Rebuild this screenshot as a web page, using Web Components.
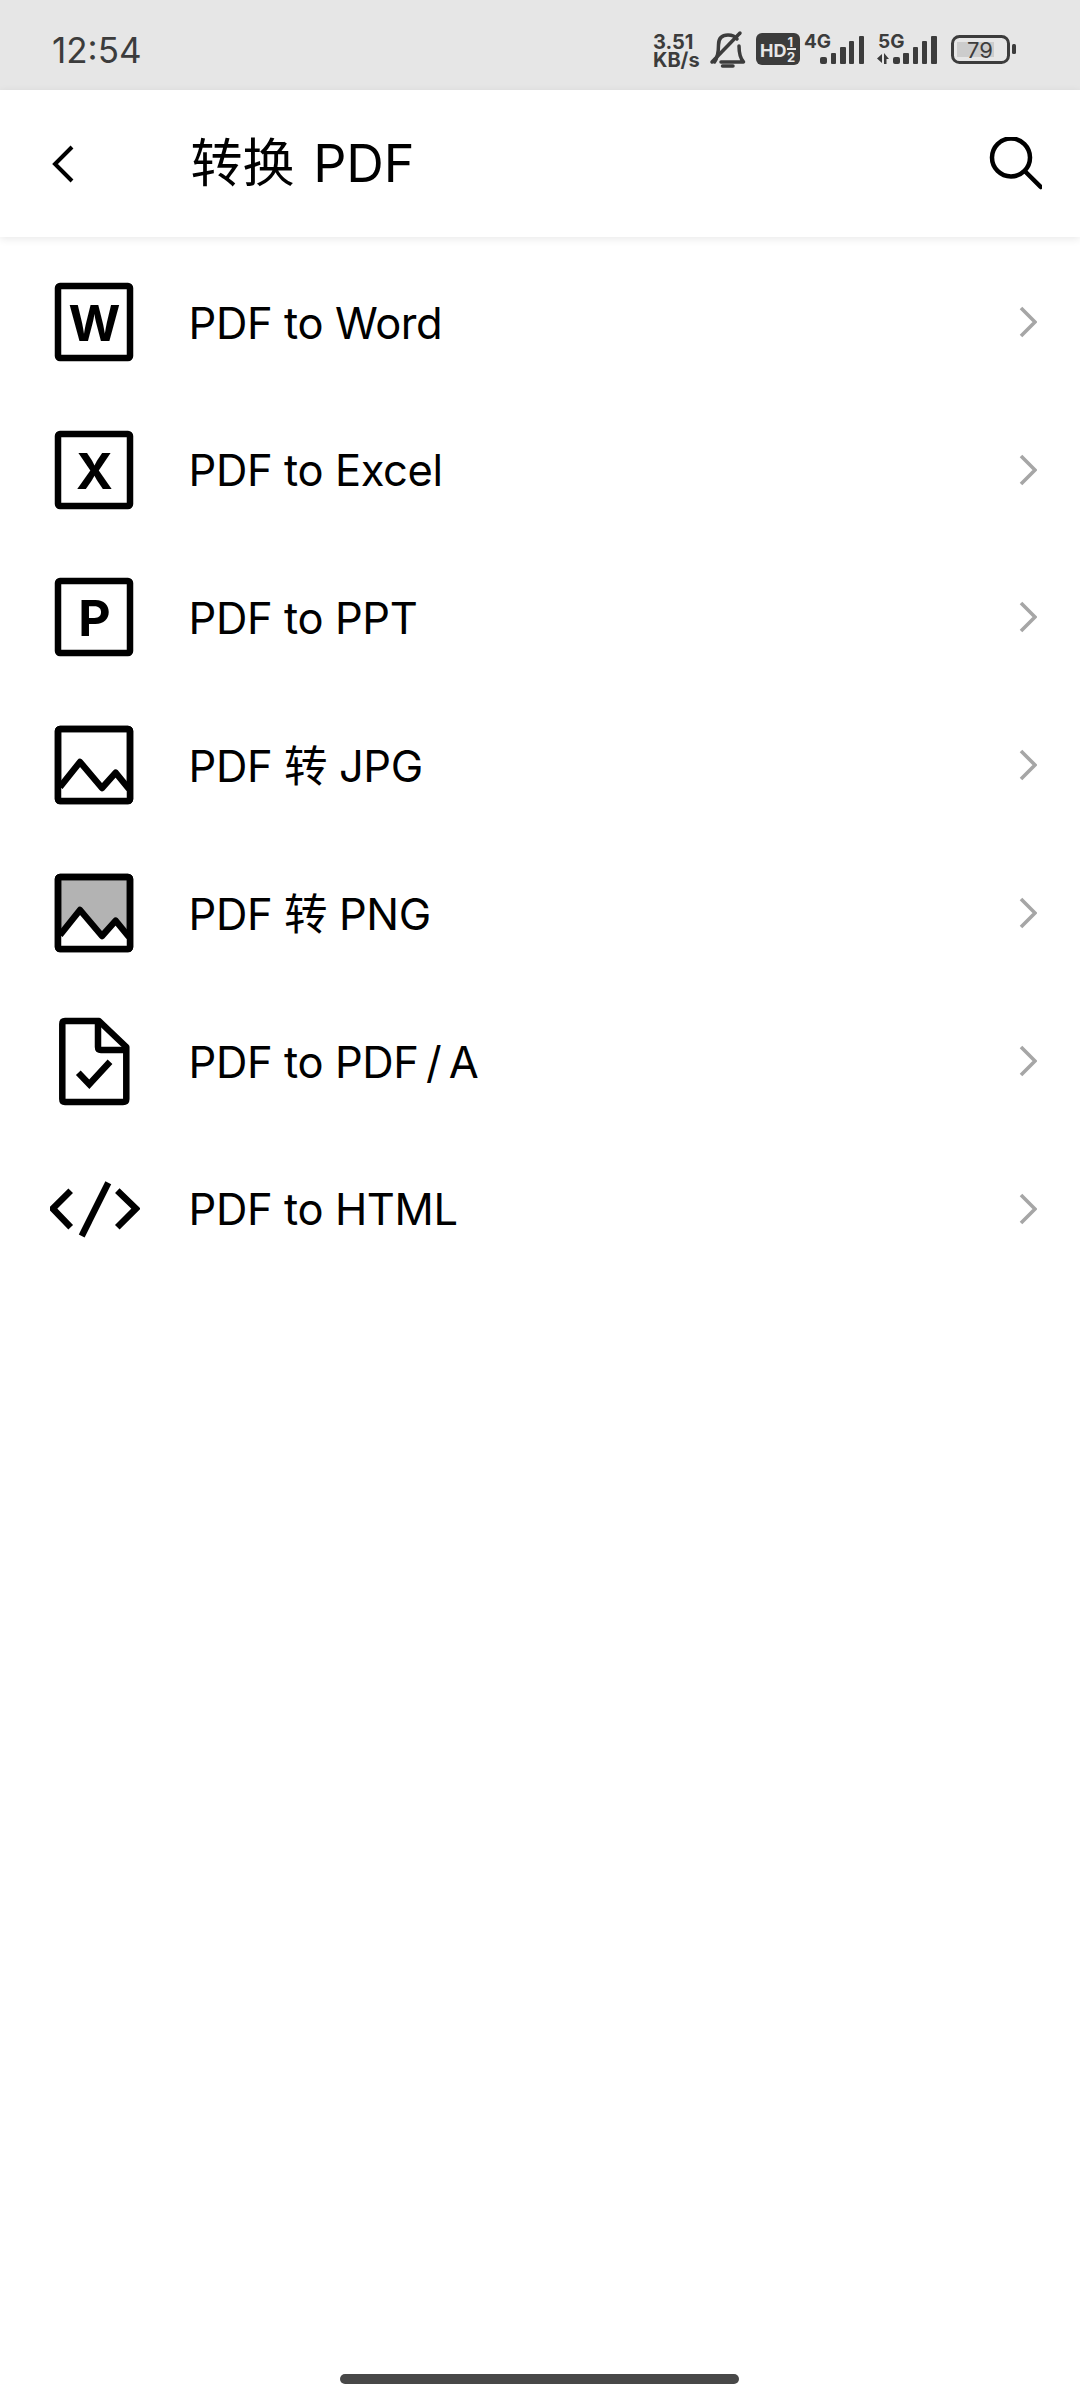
<!DOCTYPE html>
<html>
<head>
<meta charset="utf-8">
<style>
    html, body { margin: 0; padding: 0; background: #fff; }
    body {
        width: 1080px;
        height: 2400px;
        overflow: hidden;
        display: flex;
        flex-direction: column;
        font-family: Inter, "Noto Sans CJK SC", sans-serif;
    }
</style>
</head>
<body>
<status-bar time="12:54"></status-bar>
<app-header title-text="转换 PDF"></app-header>
<convert-list>
    <convert-row label="PDF to Word"><file-icon kind="letter" letter="W"></file-icon></convert-row>
    <convert-row label="PDF to Excel"><file-icon kind="letter" letter="X"></file-icon></convert-row>
    <convert-row label="PDF to PPT"><file-icon kind="letter" letter="P"></file-icon></convert-row>
    <convert-row label="PDF 转 JPG"><file-icon kind="image"></file-icon></convert-row>
    <convert-row label="PDF 转 PNG"><file-icon kind="image" fill="#b3b3b3"></file-icon></convert-row>
    <convert-row label="PDF to PDF&#8201;/&#8201;A"><file-icon kind="doc"></file-icon></convert-row>
    <convert-row label="PDF to HTML"><file-icon kind="code"></file-icon></convert-row>
</convert-list>
<home-bar></home-bar>

<script>
class StatusBar extends HTMLElement {
    constructor() {
        super();
        this.attachShadow({ mode: 'open' });
        this.shadowRoot.innerHTML = `
            <style>
                :host {
                    display: flex;
                    flex: none;
                    height: 90px;
                    background: #e6e6e6;
                    color: #3c3c3c;
                    align-items: center;
                    justify-content: space-between;
                    padding: 0 63px 0 52px;
                }
                .time { font: 400 35px/1 Inter, sans-serif; margin-top: 10px; }
                .icons { display: flex; align-items: center; }
                .speed {
                    width: 52px;
                    margin-right: 5px;
                    margin-top: 12px;
                    font: 700 20px/18px Inter, sans-serif;
                }
                svg { display: block; overflow: visible; }
                text { font-family: Inter, sans-serif; }
            </style>
            <span class="time"></span>
            <div class="icons">
                <div class="speed">3.51 KB/s</div>
                <svg width="36" height="60" viewBox="0 0 36 60" fill="none" stroke="#3c3c3c" stroke-width="3.5" stroke-linecap="round" stroke-linejoin="round">
                    <path d="M4.5 47 C8 42 8.5 37 8.5 30 C8.5 23 12 20 18 20 C22 20 25 21 27 24"/>
                    <path d="M29 31 C29 38 30 43 33.5 47 H11"/>
                    <path d="M2 47 L30 18"/>
                    <path d="M12.5 51 H23"/>
                </svg>
                <svg style="margin-left:10px" width="44" height="60" viewBox="0 0 44 60">
                    <rect x="0" y="18" width="44" height="32" rx="6" fill="#3c3c3c"/>
                    <text x="4" y="42" font-size="18" font-weight="700" fill="#e6e6e6">HD</text>
                    <text x="31.5" y="32" font-size="13" font-weight="700" fill="#e6e6e6">1</text>
                    <text x="31" y="47" font-size="13" font-weight="700" fill="#e6e6e6">2</text>
                    <rect x="31" y="33" width="9" height="2" fill="#e6e6e6"/>
                </svg>
                <svg style="margin-left:4px" width="61" height="60" viewBox="0 0 61 60" fill="#3c3c3c">
                    <text x="0" y="33" font-size="19" font-weight="700">4G</text>
                    <rect x="16" y="42" width="7" height="7" rx="2"/>
                    <rect x="27" y="38" width="5" height="11" rx="1"/>
                    <rect x="36" y="32" width="6" height="17" rx="1"/>
                    <rect x="45" y="26" width="5" height="23" rx="1"/>
                    <rect x="55" y="21" width="5" height="28" rx="1"/>
                </svg>
                <svg style="margin-left:11px" width="62" height="60" viewBox="0 0 62 60" fill="#3c3c3c">
                    <text x="2" y="33" font-size="19" font-weight="700">5G</text>
                    <path d="M1 43.5 L6 39 V48 Z M8 38 L13 44 H10.5 V49 H8 Z"/>
                    <rect x="17" y="42" width="7" height="7" rx="2"/>
                    <rect x="27" y="38" width="6" height="11" rx="1"/>
                    <rect x="37" y="32" width="5" height="17" rx="1"/>
                    <rect x="46" y="26" width="5" height="23" rx="1"/>
                    <rect x="55" y="21" width="6" height="28" rx="1"/>
                </svg>
                <svg style="margin-left:13px" width="66" height="60" viewBox="0 0 66 60">
                    <rect x="1.5" y="21.5" width="56" height="26" rx="7" fill="none" stroke="#3c3c3c" stroke-width="3"/>
                    <rect x="6" y="27" width="37" height="15" fill="#cccccc"/>
                    <text x="16" y="43" font-size="22" fill="#3c3c3c">79</text>
                    <rect x="61" y="29" width="4" height="10" rx="1.5" fill="#3c3c3c"/>
                </svg>
            </div>
        `;
        this.shadowRoot.querySelector('.time').textContent = this.getAttribute('time');
    }
}
customElements.define('status-bar', StatusBar);

class AppHeader extends HTMLElement {
    constructor() {
        super();
        this.attachShadow({ mode: 'open' });
        this.shadowRoot.innerHTML = `
            <style>
                :host {
                    display: flex;
                    flex: none;
                    position: relative;
                    z-index: 1;
                    height: 147px;
                    align-items: center;
                    background: #fff;
                    box-shadow: 0 2px 8px rgba(0,0,0,0.09);
                    padding: 0 38px 0 52px;
                }
                svg { display: block; flex: none; }
                .back { margin-right: 114.5px; }
                h1 {
                    flex: 1;
                    margin: 0;
                    font: 400 52px/1 Inter, "Noto Sans CJK SC", sans-serif;
                    word-spacing: 4px;
                    color: #000;
                }
            </style>
            <svg class="back" width="24" height="40" viewBox="0 0 24 40" fill="none" stroke="#000" stroke-width="4">
                <path d="M20 3 L3 20 L20 37"/>
            </svg>
            <h1></h1>
            <svg width="54" height="54" viewBox="0 0 54 54" fill="none" stroke="#000" stroke-width="4.5">
                <circle cx="23" cy="20.5" r="19"/>
                <path d="M37.7 35 L52.7 50" stroke-linecap="round"/>
            </svg>
        `;
        this.shadowRoot.querySelector('h1').textContent = this.getAttribute('title-text');
    }
}
customElements.define('app-header', AppHeader);

class ConvertList extends HTMLElement {
    constructor() {
        super();
        this.attachShadow({ mode: 'open' });
        this.shadowRoot.innerHTML = `
            <style>
                :host { display: block; flex: none; padding-top: 11px; }
            </style>
            <slot></slot>
        `;
    }
}
customElements.define('convert-list', ConvertList);

class ConvertRow extends HTMLElement {
    constructor() {
        super();
        this.attachShadow({ mode: 'open' });
        this.shadowRoot.innerHTML = `
            <style>
                :host {
                    display: flex;
                    height: 147.8px;
                    align-items: center;
                    padding: 0 43px 0 50px;
                    box-sizing: border-box;
                }
                .label {
                    flex: 1;
                    margin: 3px 0 0 48.5px;
                    font: 400 43.5px/1 Inter, "Noto Sans CJK SC", sans-serif;
                    letter-spacing: -0.4px;
                    color: #000;
                }
            </style>
            <slot></slot>
            <span class="label"></span>
            <svg width="18" height="32" viewBox="0 0 18 32" fill="none" stroke="#a6a6a6" stroke-width="3.6">
                <path d="M2 2 L16 16 L2 30"/>
            </svg>
        `;
        this.shadowRoot.querySelector('.label').textContent = this.getAttribute('label');
    }
}
customElements.define('convert-row', ConvertRow);

// all four icon kinds share one 90x90 box
class FileIcon extends HTMLElement {
    constructor() {
        super();
        this.attachShadow({ mode: 'open' });
        const kind = this.getAttribute('kind');
        const fill = this.getAttribute('fill') || 'none';
        let inner = '';
        if (kind === 'letter') {
            inner = `
                <rect x="8" y="9" width="72" height="72" rx="2"/>
                <text x="44.5" y="64" text-anchor="middle" font-size="50" font-weight="700" fill="#000" stroke="none">${this.getAttribute('letter')}</text>`;
        } else if (kind === 'image') {
            inner = `
                <rect x="8" y="9" width="72" height="72" rx="2" fill="${fill}"/>
                <path d="M8 69 L30 42 L52 68 L65.7 52.7 L80 70 V81 H8 Z" fill="#fff" stroke="none"/>
                <path d="M10 67 L30 42 L52 68 L65.7 52.7 L79 69" stroke-linejoin="round"/>
                <rect x="8" y="9" width="72" height="72" rx="2"/>`;
        } else if (kind === 'doc') {
            inner = `
                <path d="M49 5 H15 Q12.3 5 12.3 8 V83 Q12.3 86 15 86 H73 Q76.3 86 76.3 83 V31 Z" stroke-linejoin="round"/>
                <path d="M48 5 V31 Q48 34 51 34 H76"/>
                <path d="M28.3 56.7 L39.3 68.3 L60 45.7"/>`;
        } else if (kind === 'code') {
            inner = `
                <path d="M20.7 26.7 L2.7 44.6 L20.7 63.3"/>
                <path d="M58.3 18.7 L31.7 72"/>
                <path d="M67.3 26.7 L86 44.6 L67.3 63.3"/>`;
        }
        this.shadowRoot.innerHTML = `
            <style>
                :host { display: block; flex: none; width: 90px; height: 90px; }
                svg { display: block; }
                text { font-family: Inter, sans-serif; }
            </style>
            <svg width="90" height="90" viewBox="0 0 90 90" fill="none" stroke="#000" stroke-width="6.5">${inner}</svg>
        `;
    }
}
customElements.define('file-icon', FileIcon);

class HomeBar extends HTMLElement {
    constructor() {
        super();
        this.attachShadow({ mode: 'open' });
        this.shadowRoot.innerHTML = `
            <style>
                :host {
                    display: flex;
                    justify-content: center;
                    margin-top: auto;
                    padding: 0 1px 16px 0;
                }
                div { width: 399px; height: 10px; border-radius: 5px; background: #484848; }
            </style>
            <div></div>
        `;
    }
}
customElements.define('home-bar', HomeBar);
</script>
</body>
</html>
